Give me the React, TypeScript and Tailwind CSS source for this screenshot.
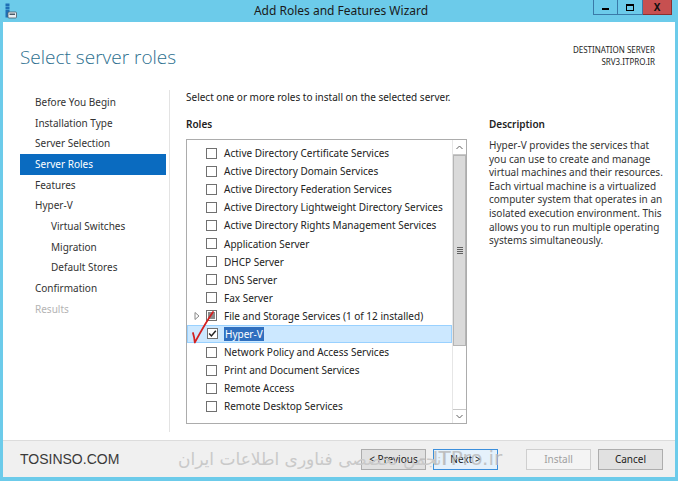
import React from "react";

const roles: { name: string; state?: "checked" | "installed"; expand?: boolean; selected?: boolean }[] = [
  { name: "Active Directory Certificate Services" },
  { name: "Active Directory Domain Services" },
  { name: "Active Directory Federation Services" },
  { name: "Active Directory Lightweight Directory Services" },
  { name: "Active Directory Rights Management Services" },
  { name: "Application Server" },
  { name: "DHCP Server" },
  { name: "DNS Server" },
  { name: "Fax Server" },
  { name: "File and Storage Services (1 of 12 installed)", state: "installed", expand: true },
  { name: "Hyper-V", state: "checked", selected: true },
  { name: "Network Policy and Access Services" },
  { name: "Print and Document Services" },
  { name: "Remote Access" },
  { name: "Remote Desktop Services" },
];

const nav: { label: string; sub?: boolean; active?: boolean; disabled?: boolean }[] = [
  { label: "Before You Begin" },
  { label: "Installation Type" },
  { label: "Server Selection" },
  { label: "Server Roles", active: true },
  { label: "Features" },
  { label: "Hyper-V" },
  { label: "Virtual Switches", sub: true },
  { label: "Migration", sub: true },
  { label: "Default Stores", sub: true },
  { label: "Confirmation" },
  { label: "Results", disabled: true },
];

function Checkbox({ state }: { state?: "checked" | "installed" }) {
  return (
    <div className="w-[11px] h-[11px] border border-[#707070] bg-white flex items-center justify-center shrink-0">
      {state === "checked" && (
        <svg width="9" height="9" viewBox="0 0 9 9">
          <path d="M1.2 4.6 L3.4 6.9 L7.8 1.8" fill="none" stroke="#222" strokeWidth="1.5" />
        </svg>
      )}
      {state === "installed" && <div className="w-[7px] h-[7px] bg-[#8a8a8a]" />}
    </div>
  );
}

export default function App() {
  return (
    <div
      className="w-[678px] h-[481px] bg-[#6ccbea] flex flex-col relative overflow-hidden text-[#1e1e1e]"
      style={{ fontFamily: '"Noto Sans", "Open Sans", Arial, sans-serif' }}
    >
      {/* Title bar */}
      <div className="h-[22px] relative flex items-center justify-center shrink-0">
        <div className="absolute left-[5px] top-[3px]">
          <svg width="12" height="16" viewBox="0 0 12 16">
            <rect x="0.5" y="0.5" width="4" height="2.5" fill="#1f6fb5" />
            <rect x="0.5" y="3.5" width="4" height="2.5" fill="#1f6fb5" />
            <rect x="0.5" y="6.5" width="4" height="8" fill="#1f6fb5" />
            <rect x="3" y="9" width="8.5" height="6" rx="1" fill="#e8eef3" stroke="#4a5a66" strokeWidth="0.8" />
            <rect x="4.5" y="10.5" width="5.5" height="1.5" fill="#4a5a66" />
          </svg>
        </div>
        <div className="text-[12px] text-[#1a1a1a] leading-none pl-[4px]">Add Roles and Features Wizard</div>
        <div className="absolute right-[6px] top-0 flex h-[15px]">
          <div className="w-[25px] h-[15px] border border-t-0 border-[#3a7aa8] bg-[#6ccbea] flex items-center justify-center">
            <div className="w-[7px] h-[2px] bg-black mt-[3px]" />
          </div>
          <div className="w-[25px] h-[15px] border border-t-0 border-l-0 border-[#3a7aa8] bg-[#6ccbea] flex items-center justify-center">
            <div className="w-[8px] h-[7px] border-[1.5px] border-t-[2.5px] border-black" />
          </div>
          <div className="w-[29px] h-[15px] border border-t-0 border-l-0 border-[#8a3030] bg-[#c75050] flex items-center justify-center text-[10px] font-bold text-[#111] leading-none">
            X
          </div>
        </div>
      </div>

      <div className="flex-1 mx-[3px] mb-[4px] bg-white flex flex-col">
        {/* Header */}
        <div className="h-[68px] flex justify-between shrink-0">
          <div
            className="pl-[17px] pt-[22px] text-[19px] font-light text-[#2d6f8f] leading-[26px]"
            style={{ fontFamily: '"Open Sans", "Noto Sans", sans-serif' }}
          >
            Select server roles
          </div>
          <div className="pr-[20px] pt-[22px] text-right text-[8px] leading-[12px] text-[#1e1e1e]">
            <div>DESTINATION SERVER</div>
            <div>SRV3.ITPRO.IR</div>
          </div>
        </div>

        {/* Main */}
        <div className="flex-1 flex">
          {/* Nav */}
          <div className="w-[167px] pl-[17px] pr-[3px] pt-[2px] border-r border-[#e3e3e3] mb-[8px] shrink-0">
            {nav.map((n) => (
              <div
                key={n.label}
                className={`h-[20.7px] flex items-center text-[10px] ${n.sub ? "pl-[31px]" : "pl-[15px]"} ${
                  n.active ? "bg-[#0a6bc0] text-white" : n.disabled ? "text-[#b4b4b4]" : "text-[#333]"
                }`}
              >
                {n.label}
              </div>
            ))}
          </div>

          {/* Content */}
          <div className="flex-1 min-w-0 pl-[16px] flex flex-col">
            <div className="h-[14px] text-[10px] leading-[14px] text-[#222]">
              Select one or more roles to install on the selected server.
            </div>
            <div className="flex gap-[22px] mt-[13px]">
              <div className="w-[281px] flex flex-col shrink-0">
                <div className="text-[10px] font-semibold leading-[14px] text-[#222]">Roles</div>
                <div className="mt-[8px] h-[285px] border border-[#acacac] flex">
                  <div className="flex-1 min-w-0 overflow-hidden pt-[4px] relative">
                    {roles.map((r) => (
                      <div
                        key={r.name}
                        className={`h-[18.1px] flex items-center relative ${
                          r.selected ? "bg-[#cce8ff] border border-[#99d1ff]" : ""
                        }`}
                      >
                        <div className="w-[19px] flex justify-center shrink-0">
                          {r.expand && (
                            <svg width="6" height="8" viewBox="0 0 6 8">
                              <path d="M1 0.5 L5 4 L1 7.5 Z" fill="none" stroke="#888" strokeWidth="1" />
                            </svg>
                          )}
                        </div>
                        <Checkbox state={r.state} />
                        <span
                          className={`text-[10px] leading-[14px] whitespace-nowrap ${
                            r.selected ? "bg-[#2f6fbf] text-white ml-[6px] px-[1px]" : "ml-[7px] text-[#222]"
                          }`}
                        >
                          {r.name}
                        </span>
                      </div>
                    ))}
                    {/* red annotation check */}
                    <svg className="absolute left-[4px] top-[170px]" width="26" height="34" viewBox="0 0 26 34">
                      <path d="M2 23 C 3 26, 3.5 29, 3.8 32.5 C 9 23, 15 12, 22 2" fill="none" stroke="#d42020" strokeWidth="1.8" strokeLinecap="round" strokeLinejoin="round" />
                    </svg>
                  </div>
                  {/* Scrollbar */}
                  <div className="w-[14px] shrink-0 border-l border-[#e6e6e6] flex flex-col bg-white">
                    <div className="h-[15px] flex items-center justify-center border-b border-[#c8c8c8]">
                      <svg width="7" height="5" viewBox="0 0 7 5">
                        <path d="M0.5 4 L3.5 1 L6.5 4" fill="none" stroke="#606060" strokeWidth="1" />
                      </svg>
                    </div>
                    <div className="h-[191px] bg-[#dadada] border border-[#b5b5b5] flex items-center justify-center">
                      <div className="flex flex-col gap-[1px]">
                        <div className="w-[6px] h-[1px] bg-[#606060]" />
                        <div className="w-[6px] h-[1px] bg-[#606060]" />
                        <div className="w-[6px] h-[1px] bg-[#606060]" />
                        <div className="w-[6px] h-[1px] bg-[#606060]" />
                      </div>
                    </div>
                    <div className="flex-1" />
                    <div className="h-[14px] flex items-center justify-center border-t border-[#c8c8c8]">
                      <svg width="7" height="5" viewBox="0 0 7 5">
                        <path d="M0.5 1 L3.5 4 L6.5 1" fill="none" stroke="#606060" strokeWidth="1" />
                      </svg>
                    </div>
                  </div>
                </div>
              </div>
              <div className="w-[178px] shrink-0">
                <div className="text-[10px] font-semibold leading-[14px] text-[#222]">Description</div>
                <div className="mt-[8px] text-[10px] leading-[13.6px] text-[#333]">
                  Hyper-V provides the services that you can use to create and manage virtual machines and their
                  resources. Each virtual machine is a virtualized computer system that operates in an isolated
                  execution environment. This allows you to run multiple operating systems simultaneously.
                </div>
              </div>
            </div>
          </div>
        </div>

        {/* Footer */}
        <div className="h-[37px] bg-[#f0f0f0] border-t border-[#dcdcdc] flex items-center pl-[17px] pr-[12px] relative shrink-0">
          <div className="text-[14px] text-[#3a3a3a]" style={{ fontFamily: '"Liberation Sans", Arial, sans-serif' }}>
            TOSINSO.COM
          </div>
          <div className="flex-1" />
          <div className="flex gap-[7px] mr-[28px]">
            <button className="w-[65px] h-[21px] border border-[#adadad] bg-[#e1e1e1] text-[10px] text-[#222]">
              &lt; Previous
            </button>
            <button className="w-[65px] h-[21px] border border-[#3c8fdc] bg-[#e5f1fb] text-[10px] text-[#222]">
              Next &gt;
            </button>
          </div>
          <div className="flex gap-[7px]">
            <button className="w-[65px] h-[21px] border border-[#cfcfcf] bg-[#f4f4f4] text-[10px] text-[#a0a0a0]">
              Install
            </button>
            <button className="w-[65px] h-[21px] border border-[#adadad] bg-[#e1e1e1] text-[10px] text-[#222]">
              Cancel
            </button>
          </div>
          {/* watermark */}
          <div
            className="absolute left-[175px] top-[6px] text-[17px] text-[#c9c9c9] whitespace-nowrap pointer-events-none"
            dir="rtl"
            style={{ fontFamily: '"DejaVu Sans", "Noto Sans", sans-serif' }}
          >
            انجمن تخصصی فناوری اطلاعات ایران
          </div>
          <div
            className="absolute left-[416px] top-[2px] text-[20px] text-[#b8b8b8] whitespace-nowrap pointer-events-none opacity-80"
            style={{ fontFamily: '"DejaVu Sans", sans-serif' }}
          >
            - ITPro.ir
          </div>
        </div>
      </div>
    </div>
  );
}
